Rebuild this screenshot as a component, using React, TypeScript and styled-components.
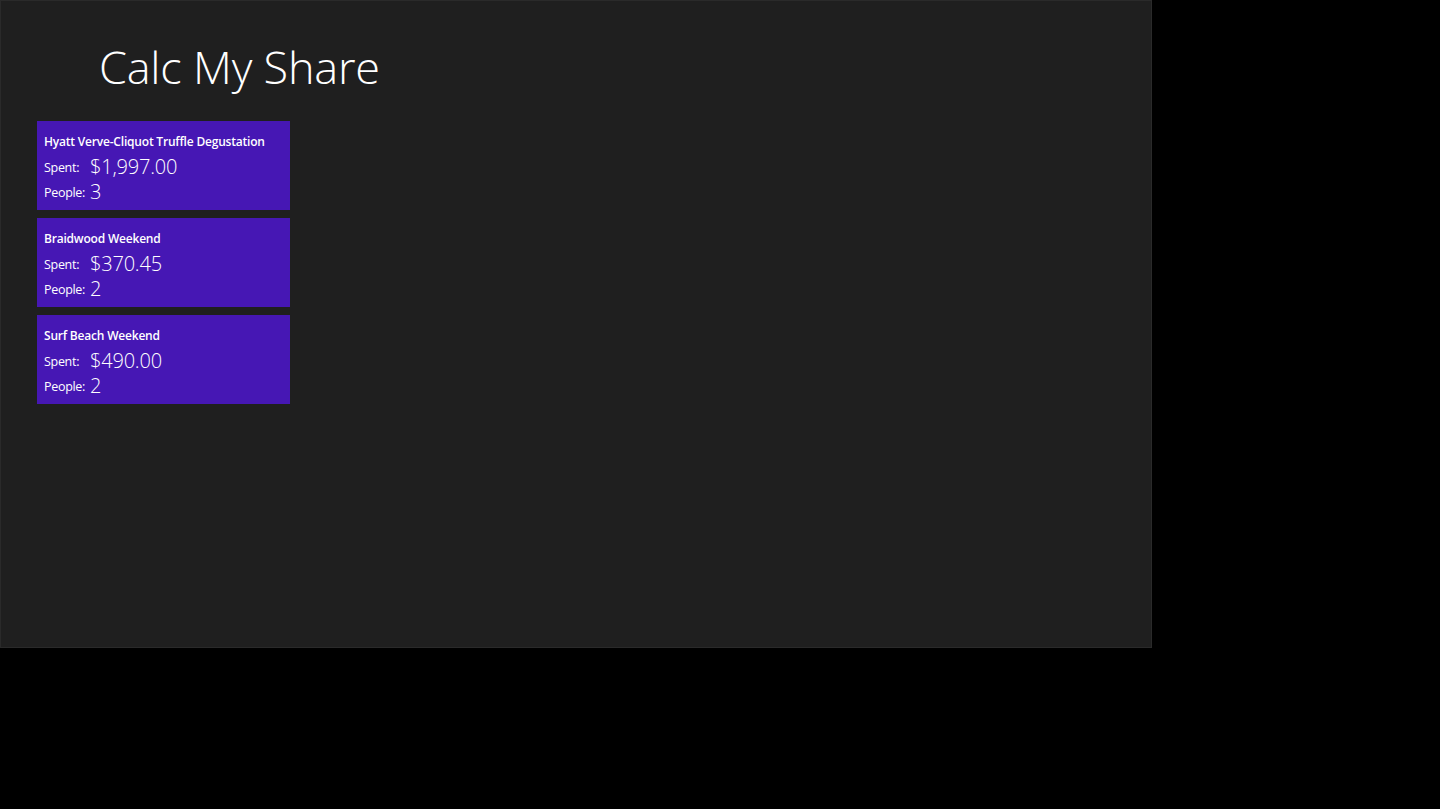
import React from "react";
import styled, { createGlobalStyle } from "styled-components";

const GlobalStyle = createGlobalStyle`
  html, body {
    margin: 0;
    padding: 0;
    background-color: #000000;
    font-family: "Open Sans", "Noto Sans", sans-serif;
  }
`;

const Screen = styled.div`
  width: 1440px;
  height: 809px;
  background-color: #000000;
  overflow: hidden;
`;

const Panel = styled.div`
  width: 1150px;
  height: 646px;
  background-color: #1f1f1f;
  border: 1px solid #2a2a2a;
  box-sizing: content-box;
`;

const Title = styled.h1`
  margin: 0;
  padding: 36px 0 0 98px;
  height: 84px;
  box-sizing: border-box;
  font-family: "Open Sans", sans-serif;
  font-weight: 300;
  font-size: 45px;
  line-height: 60px;
  color: #ffffff;
  letter-spacing: -0.2px;
`;

const TripList = styled.div`
  display: flex;
  flex-direction: column;
  gap: 8px;
  padding: 36px 0 0 36px;
`;

const TripCard = styled.div`
  width: 253px;
  height: 89px;
  background-color: #4617b4;
  padding: 12px 0 0 7px;
  box-sizing: border-box;
  color: #ffffff;
`;

const TripName = styled.div`
  font-family: "Open Sans", sans-serif;
  font-weight: 600;
  font-size: 12px;
  line-height: 17px;
  letter-spacing: -0.2px;
`;

const Details = styled.div`
  display: grid;
  grid-template-columns: 41px auto;
  grid-auto-rows: 25px;
  column-gap: 5px;
  align-items: center;
  margin-top: 4px;
`;

const Label = styled.span`
  font-family: "Open Sans", sans-serif;
  font-size: 12.5px;
  line-height: 16px;
  letter-spacing: -0.3px;
  white-space: nowrap;
  padding-top: 2px;
`;

const Value = styled.span`
  font-family: "Open Sans", sans-serif;
  font-weight: 300;
  font-size: 20px;
  line-height: 25px;
  letter-spacing: -0.2px;
`;

const trips = [
  { name: "Hyatt Verve-Cliquot Truffle Degustation", spent: "$1,997.00", people: 3 },
  { name: "Braidwood Weekend", spent: "$370.45", people: 2 },
  { name: "Surf Beach Weekend", spent: "$490.00", people: 2 },
];

const App = () => {
  return (
    <Screen>
      <GlobalStyle />
      <Panel>
        <Title>Calc My Share</Title>
        <TripList>
          {trips.map((trip) => (
            <TripCard key={trip.name}>
              <TripName>{trip.name}</TripName>
              <Details>
                <Label>Spent:</Label>
                <Value>{trip.spent}</Value>
                <Label>People:</Label>
                <Value>{trip.people}</Value>
              </Details>
            </TripCard>
          ))}
        </TripList>
      </Panel>
    </Screen>
  );
};

export default App;
